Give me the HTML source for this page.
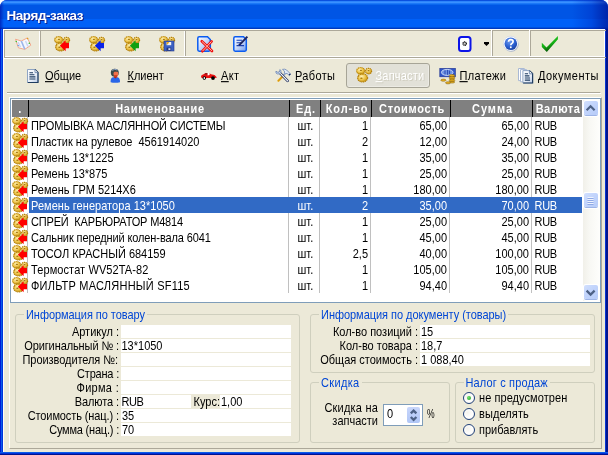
<!DOCTYPE html>
<html><head><meta charset="utf-8"><title>Наряд-заказ</title>
<style>
*{box-sizing:border-box;margin:0;padding:0}
html,body{width:608px;height:455px;overflow:hidden;background:#fff}
body{font-family:"Liberation Sans",sans-serif;font-size:11px;color:#000;position:relative}
svg{position:absolute;overflow:visible}
#win{position:absolute;left:0;top:0;width:608px;height:455px;background:#0036dd;border-radius:7px 7px 0 0;overflow:hidden}
#win>div,#win>span,#win>svg{position:absolute}
#title{left:0;top:0;width:608px;height:29px;
background:linear-gradient(to bottom,#0a50e0 0 1px,#2d84fb 1px 2px,#3a90ff 2px 3px,#1c78f8 3px 4px,#0a66ee 4px 5px,#0055e5 5px 19px,#0060f8 19px 27px,#0050dc 27px 28px,#0038c0 28px 29px)}
#title span{position:absolute;transform:scale(1,1.001);left:6.5px;top:8px;letter-spacing:-0.45px;font-weight:bold;font-size:13.5px;color:#fff;text-shadow:1px 1px 0 #0f1f8c;white-space:nowrap;line-height:16px}
#client{left:3px;top:29px;width:602px;height:423px;background:#ece9d8;border-left:1px solid #fffef6}
#bl{left:0;top:29px;width:3px;height:426px;background:linear-gradient(to right,#001ad6 0 1px,#0b5de9 1px 2px,#0036dd 2px 3px)}
#br{left:605px;top:29px;width:3px;height:426px;background:linear-gradient(to right,#0735d2 0 1px,#00148e 1px 3px)}
#bb{left:0;top:452px;width:608px;height:3px;background:linear-gradient(to bottom,#0a5ce8 0 1px,#0030d8 1px 2px,#00148e 2px 3px)}
#tr{left:572px;top:0;width:36px;height:29px;background:linear-gradient(to right,rgba(0,40,190,0),rgba(0,40,190,.4) 55%,rgba(0,20,150,.75))}
#tl{left:0;top:0;width:4px;height:29px;background:linear-gradient(to right,rgba(0,20,170,.7),rgba(0,40,200,0))}
.t{position:absolute;margin-top:1px;white-space:pre;line-height:13px;height:13px}
.r{text-align:right}
.b{color:#0046d5}
/* toolbar */
#tb{left:3px;top:29px;width:602px;height:28px;border:1px solid #fff}
#tb2{left:4px;top:30px;width:602px;height:28px;border:1px solid #aca899;border-right:none}
.sep{width:2px;height:25px;border-left:1px solid #fff;border-right:1px solid #aca899;top:31px}
.sep.p{top:29px;height:27px;border-right:none;width:1px}
.sep.p:after{content:"";position:absolute;left:0;top:1px;width:1px;height:26px;background:#aca899}
#tb3{left:4px;top:58px;width:601px;height:1px;background:#fff}
/* tabs */
.hl{height:2px;border-top:1px solid #aca899;border-bottom:1px solid #fff;border-right:1px solid #fff}
#btn{left:346px;top:63px;width:84px;height:25px;border:1px solid #a7a597;border-radius:3px;background:#e2e1d8;box-shadow:inset -1px -1px 0 #ecebe4}
/* grid */
#grid{left:10px;top:98px;width:591px;height:205px;border:1px solid #7f9db9;background:#fff}
#grid>*{position:absolute}
#ghead{left:1px;top:1px;width:570px;height:17px;background:#808080}
.hc{position:absolute;top:1px;letter-spacing:0.5px;height:17px;line-height:17px;font-weight:bold;color:#fff;text-align:center;white-space:nowrap}
.hs{position:absolute;top:0;width:1px;height:17px;background:#000}
.vs{top:18px;width:1px;height:176px;background:#c0c0c0}
.row{left:1px;width:570px;height:16px}
.row.sel{background:linear-gradient(to right,#fff 17px,#316ac5 17px);color:#fff}
.row .c{position:absolute;top:3px;line-height:13px;white-space:pre}
.ri{left:0;top:0}
/* groupbox */
.gb{border:1px solid #cfcfbe;border-radius:3px}
.gt{position:absolute;white-space:pre;line-height:13px;background:#ece9d8;color:#0046d5;padding:0 2px}
.f{background:#fff;height:13px}
.rd{width:12px;height:12px;border-radius:50%;border:1px solid #21417a;background:radial-gradient(circle at 35% 35%,#f4f3ee,#fff 60%,#e2e0d4)}
.rd b{position:absolute;left:3px;top:3px;width:4px;height:4px;border-radius:50%;background:radial-gradient(circle at 35% 35%,#6fe06f,#21a121)}
.sbtn{width:17px;height:17px;background:#fff;border-radius:3px}
.sbtn:before{content:"";position:absolute;left:1px;top:1px;width:14px;height:14px;border-radius:2px;background:linear-gradient(135deg,#d3e0fd,#c3d5fc 40%,#b6cbf8);box-shadow:0 1px 0 #9db4e6}
.sbtn svg{left:0;top:0}
.t,.row .c,.gt{transform:scaleY(1.125);transform-origin:0 10.3px}
.hc{transform:scaleY(1.125);transform-origin:0 12.3px}

</style></head><body>
<svg width="0" height="0" style="position:absolute">
<defs>
<radialGradient id="gg" cx="40%" cy="35%" r="70%"><stop offset="0" stop-color="#fdf0b8"/><stop offset="0.5" stop-color="#f0c850"/><stop offset="1" stop-color="#c08c0c"/></radialGradient>
<linearGradient id="dg" x1="0" y1="0" x2="1" y2="1"><stop offset="0" stop-color="#ffffff"/><stop offset="0.5" stop-color="#c9d8f8"/><stop offset="1" stop-color="#6d9af0"/></linearGradient>
<linearGradient id="pg" x1="0" y1="0" x2="1" y2="1"><stop offset="0" stop-color="#ffffff"/><stop offset="0.6" stop-color="#e8eef8"/><stop offset="1" stop-color="#b9c9e4"/></linearGradient>
<radialGradient id="hg" cx="40%" cy="30%" r="75%"><stop offset="0" stop-color="#6f9cf0"/><stop offset="0.6" stop-color="#2a5fd0"/><stop offset="1" stop-color="#1a3f9c"/></radialGradient>
<linearGradient id="ck" x1="0" y1="0" x2="0.4" y2="1"><stop offset="0" stop-color="#2cd42c"/><stop offset="0.6" stop-color="#14b014"/><stop offset="1" stop-color="#085008"/></linearGradient>
<symbol id="gears" viewBox="0 0 16 16" overflow="visible">
 <ellipse cx="12.6" cy="4.1" rx="3" ry="2.8" fill="url(#gg)" stroke="#b27e08" stroke-width="1.2" stroke-dasharray="1.1 0.7"/>
 <ellipse cx="6.6" cy="10.9" rx="5" ry="4.1" fill="url(#gg)" stroke="#b27e08" stroke-width="1.2" stroke-dasharray="1.1 0.7"/>
 <ellipse cx="4.7" cy="3.9" rx="4.1" ry="3.4" fill="url(#gg)" stroke="#bd8a10" stroke-width="1.2" stroke-dasharray="1.1 0.7"/>
 <ellipse cx="4.9" cy="3.3" rx="1.2" ry="0.6" fill="#a07206"/>
 <ellipse cx="12.5" cy="3.7" rx="1.1" ry="0.6" fill="#a07206"/>
 <ellipse cx="4.8" cy="6.2" rx="1.5" ry="0.5" fill="#b98c14"/>
 <ellipse cx="5.4" cy="11.2" rx="1.2" ry="0.7" fill="#a87a08"/>
 <ellipse cx="2.6" cy="9.6" rx="0.6" ry="0.6" fill="#b98c14"/>
</symbol>
<symbol id="arrR" viewBox="0 0 16 16" overflow="visible"><path d="M5.8 9.7 L11.6 4.2 L11.6 6.9 L15 6.9 L15 12.2 L11.6 12.2 L11.6 15.3 Z" fill="#ff0000"/></symbol>
<symbol id="arrB" viewBox="0 0 16 16" overflow="visible"><path d="M5.8 9.7 L11.6 4.2 L11.6 6.9 L15 6.9 L15 12.2 L11.6 12.2 L11.6 15.3 Z" fill="#0a22e8"/></symbol>
<symbol id="arrG" viewBox="0 0 16 16" overflow="visible"><path d="M5.8 9.7 L11.6 4.2 L11.6 6.9 L15 6.9 L15 12.2 L11.6 12.2 L11.6 15.3 Z" fill="#10a010"/></symbol>
<symbol id="floppy" viewBox="0 0 16 16" overflow="visible">
 <rect x="5" y="5" width="10" height="10" fill="#3d62c4" stroke="#2a3f8a" stroke-width="0.6"/>
 <rect x="7.6" y="6" width="4.6" height="3.2" fill="#f4f4f4"/><path d="M7.6 6 L10.4 6 L8.6 8.4 L7.6 8.4Z" fill="#e8a820"/>
 <rect x="7.6" y="11.6" width="4.6" height="3" fill="#22337a"/><rect x="9.4" y="12.2" width="2" height="1.8" fill="#d8dce8"/>
</symbol>
<symbol id="doc" viewBox="0 0 16 16" overflow="visible">
 <path d="M2.2 0.8 L10.5 0.8 L13.3 3.5 L13.3 13.8 Q13.3 15.2 11.9 15.2 L2.2 15.2 Q0.8 15.2 0.8 13.8 L0.8 2.2 Q0.8 0.8 2.2 0.8Z" fill="url(#dg)" stroke="#0b5cf0" stroke-width="1.5"/>
</symbol>
</defs></svg>

<div id="win">
<div id="title"><span>Наряд-заказ</span></div>
<div id="tr"></div><div id="tl"></div><div id="client"></div><div id="bl"></div><div id="br"></div><div id="bb"></div>
<div id="tb"></div><div id="tb2"></div><div id="tb3"></div>
<div class="sep" style="left:39px"></div>
<div class="sep" style="left:184px"></div>
<div class="sep p" style="left:491px"></div>
<div class="sep p" style="left:529px"></div>
<!-- book -->
<svg style="left:15px;top:36px" width="18" height="16" viewBox="15 36 18 16"><path d="M15.5 39.2 L21.3 41 L27.4 37.9 L30.8 45.2 L24.8 49.4 L18.4 47.8Z" fill="#f4f7fd" stroke="#f3a98c" stroke-width="1"/><path d="M21.3 41 L24.8 49.2" stroke="#9bb4ea" stroke-width="1.6"/><path d="M18 42 L20.5 47 M25.5 41 L28 46.5" stroke="#c8d6f4" stroke-width="1.5"/><circle cx="16.3" cy="41.5" r="0.8" fill="#35c035"/><circle cx="29.3" cy="43.3" r="0.8" fill="#35c035"/><circle cx="27.6" cy="38.6" r="0.8" fill="#e0a020"/><circle cx="18.2" cy="45.6" r="0.7" fill="#4090f0"/></svg>
<svg style="left:54px;top:36px" width="16" height="16"><use href="#gears"/><use href="#arrR"/></svg>
<svg style="left:89px;top:36px" width="16" height="16"><use href="#gears"/><use href="#arrB"/></svg>
<svg style="left:124px;top:36px" width="16" height="16"><use href="#gears"/><use href="#arrG"/></svg>
<svg style="left:159px;top:36px" width="16" height="16"><use href="#gears"/><use href="#floppy"/></svg>
<!-- doc X -->
<svg style="left:197px;top:36px" width="16" height="16"><use href="#doc"/><path d="M4.8 5.2 L15 15 M14.6 5.4 L5.4 15.2" stroke="#f01010" stroke-width="2.7" stroke-linecap="round"/><path d="M5.2 5.6 L14.6 14.6 M14.2 5.8 L5.8 14.8" stroke="#ffc8b8" stroke-width="0.9" stroke-linecap="round"/></svg>
<!-- doc pen -->
<svg style="left:233px;top:36px" width="16" height="16"><use href="#doc"/><path d="M3.5 4.2 H9 M3.5 6.8 H8 M3.5 9.6 H11" stroke="#1a3fb0" stroke-width="1.1"/><path d="M14.4 0.6 L6 9.4" stroke="#1c2460" stroke-width="2"/></svg>
<!-- settings -->
<svg style="left:458px;top:36px" width="14" height="16"><rect x="1" y="1" width="11.5" height="14" rx="2.5" fill="#fff" stroke="#0c14e8" stroke-width="2"/><circle cx="6.7" cy="7.6" r="1.8" fill="#999" stroke="#111" stroke-width="1.1" stroke-dasharray="0.9 0.5"/><circle cx="6.7" cy="7.6" r="0.6" fill="#eee"/></svg>
<svg style="left:484px;top:42px" width="5" height="4"><path d="M0 0 H5 V1.4 L2.5 4 L0 1.4Z" fill="#000"/></svg>
<!-- help -->
<svg style="left:503px;top:36px;transform:scale(1,1.001)" width="16" height="16"><circle cx="8.2" cy="8.2" r="7.5" fill="#a9b3c6"/><circle cx="7.7" cy="7.6" r="7.4" fill="#fff" stroke="#c3cce0" stroke-width="0.5"/><circle cx="7.8" cy="7.7" r="6.3" fill="url(#hg)"/><path d="M5.5 5.7 Q5.5 3.7 7.8 3.7 Q10.1 3.7 10.1 5.5 Q10.1 6.7 8.8 7.4 Q7.8 7.9 7.8 9.2" stroke="#fff" stroke-width="1.7" fill="none"/><circle cx="7.8" cy="11.2" r="0.95" fill="#fff"/></svg>
<!-- check -->
<svg style="left:541px;top:36px" width="18" height="16" viewBox="541 36 18 16"><path d="M541.8 42.8 L546.5 47.6 L557.9 36 L557.9 39.3 L546.8 52 L541.8 47Z" fill="url(#ck)"/></svg>

<div class="hl" style="left:7px;top:92px;width:594px"></div>
<!-- page icon -->
<svg style="left:27px;top:69px" width="12" height="14"><path d="M0.5 0.5 H8 L11 3.5 V13.5 H0.5Z" fill="url(#pg)" stroke="#8fa5c4" stroke-width="1"/><path d="M8 0.5 L11 3.5 V13.5 H0.8" fill="none" stroke="#1f3c60" stroke-width="1.2"/><path d="M8 0.8 V3.6 H10.8" fill="#fff" stroke="#5f7ca4" stroke-width="0.8"/><path d="M2.4 3.7 H6 M2.4 5.8 H7.4 M2.4 7.9 H8.4 M2.4 10 H8.4" stroke="#1f3c60" stroke-width="1.1"/></svg>
<span class="t" style="left:45px;top:69px"><u>О</u>бщие</span>
<!-- person -->
<svg style="left:110px;top:68px" width="11" height="15"><path d="M0.6 14.2 Q0.4 9.6 3 9.2 L7.4 9.2 Q10.2 9.6 10 14.2 Q5 15.4 0.6 14.2Z" fill="#2a66e8"/><path d="M3.6 9 L5.3 10.6 L7 9 Z" fill="#a01818"/><circle cx="4.8" cy="4.8" r="4" fill="#3a4a48"/><path d="M2.2 2.4 Q4.6 0.4 7.4 2" stroke="#8fa4c8" stroke-width="1" fill="none"/><rect x="3.6" y="3.8" width="4.6" height="4.6" rx="1.4" fill="#f0714a"/><rect x="4" y="7.2" width="3.2" height="2.2" fill="#c83a20"/></svg>
<span class="t" style="left:127.5px;top:69px"><u>К</u>лиент</span>
<!-- car -->
<svg style="left:200px;top:72px" width="18" height="9"><path d="M1 4.6 Q1 3 3 2.6 L5 1.4 L9 0.9 L11 2.2 L14.6 3 L17 5.6 L15 5.9 L1.6 5.9Z" fill="#e81010"/><path d="M5 1.2 L7.6 0.9 L7.6 2.4 L4.4 2.4Z" fill="#8a1010"/><path d="M7.6 0.8 L9.6 1 L9.6 3 L7.6 3.6Z" fill="#fff"/><circle cx="4.3" cy="6.1" r="1.8" fill="#000"/><ellipse cx="4.3" cy="6.1" rx="0.7" ry="1.2" fill="#fff"/><circle cx="13" cy="6.1" r="1.9" fill="#000"/></svg>
<span class="t" style="left:221px;top:69px;letter-spacing:.4px"><u>А</u>кт</span>
<!-- tools -->
<svg style="left:275px;top:68px" width="17" height="15"><path d="M8 8 L3.4 12.8" stroke="#e8a818" stroke-width="2.2" stroke-linecap="round"/><path d="M8 8 L3.4 12.8" stroke="#7a5a10" stroke-width="0.5" stroke-dasharray="0.6 0.9"/><path d="M8.4 7.4 L11 4.6" stroke="#8ea4c8" stroke-width="1.6"/><path d="M7.5 1.4 Q10 0.6 11.6 2 L15.6 6 L14.4 7.6 L12 5.4 Q10.6 6.2 9.4 5 Q10.4 3 7.5 1.4Z" fill="#dfe8f6" stroke="#6f88b4" stroke-width="0.8"/><path d="M14 6.8 L15.4 6.2" stroke="#1c2c5c" stroke-width="1.4"/><path d="M4.6 4.6 L12.6 12.8" stroke="#1c2c5c" stroke-width="2.6" stroke-linecap="round"/><path d="M4.6 4.6 L12.6 12.8" stroke="#fff" stroke-width="1.1" stroke-linecap="round"/><path d="M4.8 1.6 Q5.4 3.6 3.6 4.2 Q1.8 4.6 1 3 Q0.2 5.6 2.6 6 Q4.6 6.2 5.6 5 L6 3.6 Q6.2 2 4.8 1.6Z" fill="#c7d6ee" stroke="#6f88b4" stroke-width="0.8"/></svg>
<span class="t" style="left:295px;top:69px;letter-spacing:.35px"><u>Р</u>аботы</span>
<!-- active button -->
<div id="btn"></div>
<svg style="left:356px;top:67px" width="16" height="16"><use href="#gears"/></svg>
<span class="t" style="left:375.5px;top:69px;letter-spacing:.2px;color:#fff;text-shadow:1px 1px 0 #d0cec0"><u>З</u>апчасти</span>
<!-- payments -->
<svg style="left:439px;top:68px" width="17" height="17"><rect x="0.8" y="0.4" width="15.6" height="8.4" fill="#2f55c8"/><rect x="0.8" y="0.4" width="15.6" height="8.4" fill="none" stroke="#1c2f8c" stroke-width="0.6"/><ellipse cx="8.2" cy="4.4" rx="5.8" ry="3" fill="#6f94e4" stroke="#d4def4" stroke-width="0.9"/><path d="M6 2.4 V6.4 M8.6 2 V6.8 M10.6 2.6 V6.2" stroke="#2a48b0" stroke-width="1"/><g fill="#e8b020" stroke="#7a5808" stroke-width="0.5"><ellipse cx="13" cy="14" rx="2.8" ry="1.1"/><ellipse cx="13" cy="12.4" rx="2.8" ry="1.1"/><ellipse cx="13" cy="10.8" rx="2.8" ry="1.1"/><ellipse cx="13" cy="9.2" rx="2.8" ry="1.1"/><ellipse cx="13" cy="7.6" rx="2.8" ry="1.1"/><ellipse cx="4.4" cy="12.2" rx="2.6" ry="1.1"/><ellipse cx="9" cy="14.8" rx="2.6" ry="1.1"/></g></svg>
<span class="t" style="left:459.5px;top:69px;letter-spacing:.3px"><u>П</u>латежи</span>
<!-- docs -->
<svg style="left:518px;top:68px" width="16" height="16"><path d="M0.5 0.5 H6.4 V12.6 L0.5 12.6Z" fill="#fff" stroke="#a9b9d4" stroke-width="1"/><path d="M2.5 1.6 H8.6 V13.8 H2.5Z" fill="#fff" stroke="#a9b9d4" stroke-width="1"/><path d="M4.9 2.6 H11.4 L14.6 5.6 V15 H4.9Z" fill="url(#pg)" stroke="#8fa5c4" stroke-width="1"/><path d="M11.4 2.6 L14.6 5.6 V15 H5.2" fill="none" stroke="#1f3c60" stroke-width="1.2"/><path d="M11.4 2.9 V5.8 H14.4" fill="#fff" stroke="#5f7ca4" stroke-width="0.8"/><path d="M6.8 5.8 H10 M6.8 7.9 H11.4 M6.8 10 H12 M6.8 12.1 H12" stroke="#1f3c60" stroke-width="1.1"/></svg>
<span class="t" style="left:538px;top:69px;letter-spacing:.45px"><u>Д</u>окументы</span>

<div id="grid">
<div id="ghead">
<div class="hc" style="left:0px;width:16px;letter-spacing:0.5px">.</div>
<div class="hc" style="left:18px;width:260px;letter-spacing:0.75px">Наименование</div>
<div class="hc" style="left:279px;width:30px;letter-spacing:0.8px">Ед.</div>
<div class="hc" style="left:310px;width:50px;letter-spacing:0.9px">Кол-во</div>
<div class="hc" style="left:361px;width:78px;letter-spacing:0.72px">Стоимость</div>
<div class="hc" style="left:440px;width:81px;letter-spacing:0.95px">Сумма</div>
<div class="hc" style="left:521px;width:50px;letter-spacing:0.5px">Валюта</div>
<div class="hs" style="left:16px"></div>
<div class="hs" style="left:277px"></div>
<div class="hs" style="left:308px"></div>
<div class="hs" style="left:359px"></div>
<div class="hs" style="left:438px"></div>
<div class="hs" style="left:520px"></div>
</div>
<div class="vs" style="left:16px"></div>
<div class="vs" style="left:277px"></div>
<div class="vs" style="left:308px"></div>
<div class="vs" style="left:359px"></div>
<div class="vs" style="left:438px"></div>
<div class="vs" style="left:520px"></div>
<div class="row" style="top:18px">
<svg class="ri" width="16" height="16"><use href="#gears"/><use href="#arrR"/></svg>
<span class="c" style="left:19px;letter-spacing:-0.115px">ПРОМЫВКА МАСЛЯННОЙ СИСТЕМЫ</span>
<span class="c" style="left:285.5px">шт.</span>
<span class="c r" style="right:214px">1</span>
<span class="c r" style="right:135px">65,00</span>
<span class="c r" style="right:53px">65,00</span>
<span class="c" style="left:522.5px;letter-spacing:-.3px">RUB</span>
</div>
<div class="row" style="top:34px">
<svg class="ri" width="16" height="16"><use href="#gears"/><use href="#arrR"/></svg>
<span class="c" style="left:19px;letter-spacing:-0.03px">Пластик на рулевое&nbsp; 4561914020</span>
<span class="c" style="left:285.5px">шт.</span>
<span class="c r" style="right:214px">2</span>
<span class="c r" style="right:135px">12,00</span>
<span class="c r" style="right:53px">24,00</span>
<span class="c" style="left:522.5px;letter-spacing:-.3px">RUB</span>
</div>
<div class="row" style="top:50px">
<svg class="ri" width="16" height="16"><use href="#gears"/><use href="#arrR"/></svg>
<span class="c" style="left:19px;letter-spacing:0px">Ремень 13*1225</span>
<span class="c" style="left:285.5px">шт.</span>
<span class="c r" style="right:214px">1</span>
<span class="c r" style="right:135px">35,00</span>
<span class="c r" style="right:53px">35,00</span>
<span class="c" style="left:522.5px;letter-spacing:-.3px">RUB</span>
</div>
<div class="row" style="top:66px">
<svg class="ri" width="16" height="16"><use href="#gears"/><use href="#arrR"/></svg>
<span class="c" style="left:19px;letter-spacing:0px">Ремень 13*875</span>
<span class="c" style="left:285.5px">шт.</span>
<span class="c r" style="right:214px">1</span>
<span class="c r" style="right:135px">25,00</span>
<span class="c r" style="right:53px">25,00</span>
<span class="c" style="left:522.5px;letter-spacing:-.3px">RUB</span>
</div>
<div class="row" style="top:82px">
<svg class="ri" width="16" height="16"><use href="#gears"/><use href="#arrR"/></svg>
<span class="c" style="left:19px;letter-spacing:0px">Ремень ГРМ 5214X6</span>
<span class="c" style="left:285.5px">шт.</span>
<span class="c r" style="right:214px">1</span>
<span class="c r" style="right:135px">180,00</span>
<span class="c r" style="right:53px">180,00</span>
<span class="c" style="left:522.5px;letter-spacing:-.3px">RUB</span>
</div>
<div class="row sel" style="top:98px">
<svg class="ri" width="16" height="16"><use href="#gears"/><use href="#arrR"/></svg>
<span class="c" style="left:19px;letter-spacing:0.04px">Ремень генератора 13*1050</span>
<span class="c" style="left:285.5px">шт.</span>
<span class="c r" style="right:214px">2</span>
<span class="c r" style="right:135px">35,00</span>
<span class="c r" style="right:53px">70,00</span>
<span class="c" style="left:522.5px;letter-spacing:-.3px">RUB</span>
</div>
<div class="row" style="top:114px">
<svg class="ri" width="16" height="16"><use href="#gears"/><use href="#arrR"/></svg>
<span class="c" style="left:19px;letter-spacing:-0.17px">СПРЕЙ&nbsp; КАРБЮРАТОР М4814</span>
<span class="c" style="left:285.5px">шт.</span>
<span class="c r" style="right:214px">1</span>
<span class="c r" style="right:135px">25,00</span>
<span class="c r" style="right:53px">25,00</span>
<span class="c" style="left:522.5px;letter-spacing:-.3px">RUB</span>
</div>
<div class="row" style="top:130px">
<svg class="ri" width="16" height="16"><use href="#gears"/><use href="#arrR"/></svg>
<span class="c" style="left:19px;letter-spacing:-0.11px">Сальник передний колен-вала 6041</span>
<span class="c" style="left:285.5px">шт.</span>
<span class="c r" style="right:214px">1</span>
<span class="c r" style="right:135px">45,00</span>
<span class="c r" style="right:53px">45,00</span>
<span class="c" style="left:522.5px;letter-spacing:-.3px">RUB</span>
</div>
<div class="row" style="top:146px">
<svg class="ri" width="16" height="16"><use href="#gears"/><use href="#arrR"/></svg>
<span class="c" style="left:19px;letter-spacing:0px">ТОСОЛ КРАСНЫЙ 684159</span>
<span class="c" style="left:285.5px">шт.</span>
<span class="c r" style="right:214px">2,5</span>
<span class="c r" style="right:135px">40,00</span>
<span class="c r" style="right:53px">100,00</span>
<span class="c" style="left:522.5px;letter-spacing:-.3px">RUB</span>
</div>
<div class="row" style="top:162px">
<svg class="ri" width="16" height="16"><use href="#gears"/><use href="#arrR"/></svg>
<span class="c" style="left:19px;letter-spacing:0.1px">Термостат WV52TA-82</span>
<span class="c" style="left:285.5px">шт.</span>
<span class="c r" style="right:214px">1</span>
<span class="c r" style="right:135px">105,00</span>
<span class="c r" style="right:53px">105,00</span>
<span class="c" style="left:522.5px;letter-spacing:-.3px">RUB</span>
</div>
<div class="row" style="top:178px">
<svg class="ri" width="16" height="16"><use href="#gears"/><use href="#arrR"/></svg>
<span class="c" style="left:19px;letter-spacing:0.23px">ФИЛЬТР МАСЛЯННЫЙ SF115</span>
<span class="c" style="left:285.5px">шт.</span>
<span class="c r" style="right:214px">1</span>
<span class="c r" style="right:135px">94,40</span>
<span class="c r" style="right:53px">94,40</span>
<span class="c" style="left:522.5px;letter-spacing:-.3px">RUB</span>
</div>
<div id="sb" style="left:572px;top:1px;width:17px;height:201px;background:linear-gradient(to right,#f1f0e9,#f8f8f4 40%,#fefefc)"></div>
<div class="sbtn" style="left:572px;top:1px"><svg width="17" height="17"><path d="M3.6 10.2 L7.6 6.2 L11.6 10.2" stroke="#4d6185" stroke-width="2.2" fill="none"/></svg></div>
<div class="sbtn" style="left:572px;top:185px"><svg width="17" height="17"><path d="M3.6 6.6 L7.6 10.6 L11.6 6.6" stroke="#4d6185" stroke-width="2.2" fill="none"/></svg></div>
<div class="sbtn" style="left:572px;top:93px"><svg width="17" height="17"><path d="M4.5 5.5 H10.5 M4.5 7.5 H10.5 M4.5 9.5 H10.5 M4.5 11.5 H10.5" stroke="#eef3fe" stroke-width="1"/><path d="M4.5 6.5 H10.5 M4.5 8.5 H10.5 M4.5 10.5 H10.5 M4.5 12.5 H10.5" stroke="#8fa9e6" stroke-width="1"/></svg></div>

</div>
<!-- raised panel bevel -->
<div style="left:9px;top:97px;width:593px;height:352px;border-top:1px solid #fff;border-left:1px solid #fff;border-right:1px solid #aca899;border-bottom:1px solid #aca899"></div>
<!-- group 1 -->
<div class="gb" style="left:15px;top:314px;width:285px;height:129px"></div>
<span class="gt" style="left:24px;top:309px;letter-spacing:-.05px">Информация по товару</span>
<div class="f" style="left:121px;top:325px;width:170px"></div>
<div class="f" style="left:121px;top:339px;width:170px"></div>
<div class="f" style="left:121px;top:353px;width:170px"></div>
<div class="f" style="left:121px;top:367px;width:170px"></div>
<div class="f" style="left:121px;top:381px;width:170px"></div>
<div class="f" style="left:121px;top:395px;width:70px"></div>
<div class="f" style="left:220px;top:395px;width:71px"></div>
<div class="f" style="left:121px;top:409px;width:170px"></div>
<div class="f" style="left:121px;top:423px;width:170px"></div>
<span class="t r" style="right:489px;top:325px">Артикул :</span>
<span class="t r" style="letter-spacing:-0.1px;right:489px;top:339px">Оригинальный № :</span>
<span class="t r" style="letter-spacing:-0.06px;right:490px;top:353px">Производителя №:</span>
<span class="t r" style="letter-spacing:-0.2px;right:489px;top:367px">Страна :</span>
<span class="t r" style="letter-spacing:0.3px;right:489px;top:381px">Фирма :</span>
<span class="t r" style="letter-spacing:-0.1px;right:489px;top:395px">Валюта :</span>
<span class="t r" style="letter-spacing:-0.1px;right:489px;top:409px">Стоимость (нац.) :</span>
<span class="t r" style="letter-spacing:-0.2px;right:489px;top:423px">Сумма (нац.) :</span>
<span class="t" style="left:121.5px;top:339px">13*1050</span>
<span class="t" style="left:121.5px;top:395px;letter-spacing:-.4px">RUB</span>
<span class="t" style="left:193.5px;top:395px">Курс:</span>
<span class="t" style="left:221px;top:395px">1,00</span>
<span class="t" style="left:122px;top:409px">35</span>
<span class="t" style="left:122px;top:423px">70</span>
<!-- group 2 -->
<div class="gb" style="left:310px;top:314px;width:285px;height:59px"></div>
<span class="gt" style="left:319px;top:309px;letter-spacing:-.03px">Информация по документу (товары)</span>
<div class="f" style="left:420px;top:325px;width:170px"></div>
<div class="f" style="left:420px;top:339px;width:170px"></div>
<div class="f" style="left:420px;top:353px;width:170px"></div>
<span class="t r" style="right:190px;top:325px">Кол-во позиций :</span>
<span class="t r" style="right:190px;top:339px">Кол-во товара :</span>
<span class="t r" style="right:190px;top:353px">Общая стоимость :</span>
<span class="t" style="left:421px;top:325px">15</span>
<span class="t" style="left:421px;top:339px">18,7</span>
<span class="t" style="left:421px;top:353px">1 088,40</span>
<!-- group 3 -->
<div class="gb" style="left:310px;top:382px;width:140px;height:61px"></div>
<span class="gt" style="left:319px;top:377px;letter-spacing:.35px">Скидка</span>
<span class="t r" style="right:230px;top:401px;letter-spacing:.2px">Скидка на</span>
<span class="t r" style="right:230px;top:414px">запчасти</span>
<div id="spin" style="left:383px;top:404px;width:40px;height:22px;border:1px solid #7f9db9;background:#fff"></div>
<span class="t" style="left:387px;top:407px">0</span>
<div id="spb" style="left:407px;top:407px;width:13px;height:16px;background:linear-gradient(to bottom,#c8d6fb,#b0c6f6);border-radius:2px"></div>
<svg style="left:407px;top:407px" width="14" height="16"><path d="M3.8 6.4 L6.6 3.6 L9.4 6.4 M3.8 10 L6.6 12.8 L9.4 10" stroke="#4d6185" stroke-width="2.3" fill="none"/></svg>
<span class="t" style="left:426.5px;top:407px;transform:scale(.78,1.125)">%</span>
<!-- group 4 -->
<div class="gb" style="left:455px;top:382px;width:140px;height:61px"></div>
<span class="gt" style="left:463.5px;top:377px;letter-spacing:.15px">Налог с продаж</span>
<div class="rd" style="left:463px;top:392px"><b></b></div>
<div class="rd" style="left:463px;top:408px"></div>
<div class="rd" style="left:463px;top:424px"></div>
<span class="t" style="left:479px;top:391px;letter-spacing:.07px">не предусмотрен</span>
<span class="t" style="left:479px;top:407px;letter-spacing:.1px">выделять</span>
<span class="t" style="left:479px;top:423px">прибавлять</span>

</div>
</body></html>
